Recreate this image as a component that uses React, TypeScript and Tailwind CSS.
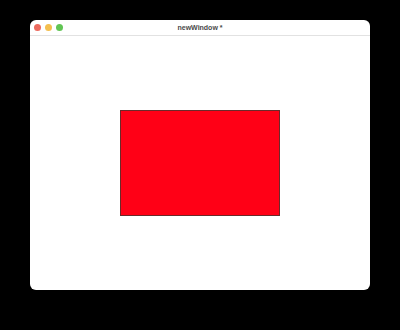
export default function App() {
  return (
    <div className="w-[400px] h-[330px] bg-black pt-[20px] pl-[30px]">
      <div className="w-[340px] h-[270px] bg-white rounded-[6px] overflow-hidden flex flex-col">
        {/* title bar */}
        <div className="relative h-[16px] shrink-0 border-b border-[#e2e2e2] flex items-center justify-center">
          <div className="absolute left-[4px] top-[4px] flex gap-[4px]">
            <span className="w-[7px] h-[7px] rounded-full bg-[#ec6a5e]" />
            <span className="w-[7px] h-[7px] rounded-full bg-[#f4bf4f]" />
            <span className="w-[7px] h-[7px] rounded-full bg-[#61c554]" />
          </div>
          <span
            className="text-[7px] font-bold text-[#4a4a4a] leading-none"
            style={{ fontFamily: "'Liberation Sans', Arial, sans-serif" }}
          >
            newWindow *
          </span>
        </div>
        {/* canvas */}
        <div className="flex-1 flex items-center justify-center">
          <div className="w-[160px] h-[106px] bg-[#ff0016] border border-[#6b2a2a]" />
        </div>
      </div>
    </div>
  );
}
